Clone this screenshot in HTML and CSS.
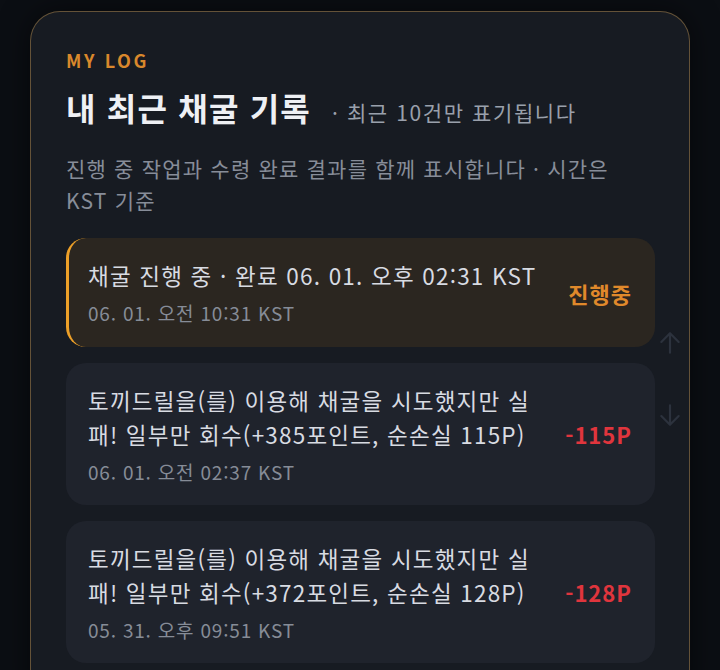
FILE: index.html
```html
<!DOCTYPE html>
<html lang="ko">
<head>
    <meta charset="UTF-8">
    <meta name="viewport" content="width=device-width, initial-scale=1.0">
    <title>내 최근 채굴 기록</title>
    <link rel="stylesheet" href="styles.css">
</head>
<body>
    <div class="log-card">
        <div class="eyebrow">MY LOG</div>

        <div class="header">
            <h1>내 최근 채굴 기록</h1>
            <span class="header-note">· 최근 10건만 표기됩니다</span>
        </div>

        <p class="description">진행 중 작업과 수령 완료 결과를 함께 표시합니다 · 시간은 KST 기준</p>

        <div class="log-list">
            <div class="log-item active">
                <div class="log-text">
                    <div class="log-title">채굴 진행 중 · 완료 06. 01. 오후 02:31 KST</div>
                    <div class="log-time">06. 01. 오전 10:31 KST</div>
                </div>
                <div class="log-value pending">진행중</div>
            </div>

            <div class="log-item">
                <div class="log-text">
                    <div class="log-title">토끼드릴을(를) 이용해 채굴을 시도했지만 실패! 일부만 회수(+385포인트, 순손실 115P)</div>
                    <div class="log-time">06. 01. 오전 02:37 KST</div>
                </div>
                <div class="log-value loss">-115P</div>
            </div>

            <div class="log-item">
                <div class="log-text">
                    <div class="log-title">토끼드릴을(를) 이용해 채굴을 시도했지만 실패! 일부만 회수(+372포인트, 순손실 128P)</div>
                    <div class="log-time">05. 31. 오후 09:51 KST</div>
                </div>
                <div class="log-value loss">-128P</div>
            </div>

            <!-- scroll hints -->
            <div class="scroll-hint">
                <svg class="arrow" viewBox="0 0 24 24" width="26" height="26">
                    <path d="M12 21V4M4 11l8-8 8 8" fill="none" stroke="currentColor" stroke-width="2" stroke-linecap="round" stroke-linejoin="round"/>
                </svg>
                <svg class="arrow" viewBox="0 0 24 24" width="26" height="26">
                    <path d="M12 3v17M4 13l8 8 8-8" fill="none" stroke="currentColor" stroke-width="2" stroke-linecap="round" stroke-linejoin="round"/>
                </svg>
            </div>
        </div>
    </div>
</body>
</html>
```

FILE: styles.css
```css
* {
    margin: 0;
    padding: 0;
    box-sizing: border-box;
    font-family: 'Noto Sans CJK KR', 'Noto Sans', sans-serif;
}

body {
    background-color: #0b0e13;
    padding: 11px 30px 0 30px;
    height: 670px;
    overflow: hidden;
}

.log-card {
    background-color: #171b22;
    border: 1px solid rgba(196, 150, 84, 0.45);
    border-radius: 30px;
    padding: 36px 34px 40px 35px;
    box-shadow: 0 0 30px rgba(0, 0, 0, 0.5);
    min-height: 700px;
}

.eyebrow {
    color: #d9882c;
    font-size: 18px;
    font-weight: 700;
    letter-spacing: 2.6px;
    line-height: 24px;
}

.header {
    display: flex;
    align-items: baseline;
    gap: 21px;
    margin-top: 13px;
}

.header h1 {
    color: #eef0f4;
    font-size: 32px;
    font-weight: 700;
    line-height: 44px;
    letter-spacing: 1.2px;
}

.header-note {
    color: #9aa0ab;
    font-size: 21px;
    letter-spacing: 1.6px;
}

.description {
    color: #878d99;
    font-size: 21px;
    line-height: 32px;
    letter-spacing: 1.2px;
    margin-top: 23px;
    padding-right: 20px;
}

.log-list {
    position: relative;
    display: flex;
    flex-direction: column;
    gap: 16px;
    margin-top: 22px;
}

.log-item {
    display: flex;
    align-items: center;
    gap: 24px;
    background-color: #1f232c;
    border-radius: 20px;
    padding: 19.5px 23px 19.5px 22px;
}

.log-item.active {
    background-color: #2b2620;
    border-left: 3px solid #eda028;
    padding: 20px 23px 20px 19px;
}

.log-text {
    flex: 1;
}

.log-title {
    color: #d8dbe2;
    font-size: 22.5px;
    line-height: 34px;
    letter-spacing: 1.2px;
}

.log-time {
    color: #868c97;
    font-size: 19px;
    line-height: 28px;
    letter-spacing: 0.8px;
    margin-top: 7px;
}

.log-value {
    font-size: 22px;
    font-weight: 700;
    letter-spacing: 1px;
    white-space: nowrap;
}

.log-value.pending {
    color: #e0892b;
}

.log-value.loss {
    color: #e0353d;
}

.scroll-hint {
    position: absolute;
    right: -28px;
    top: 92px;
    display: flex;
    flex-direction: column;
    gap: 46px;
    color: #2c323d;
}
```
